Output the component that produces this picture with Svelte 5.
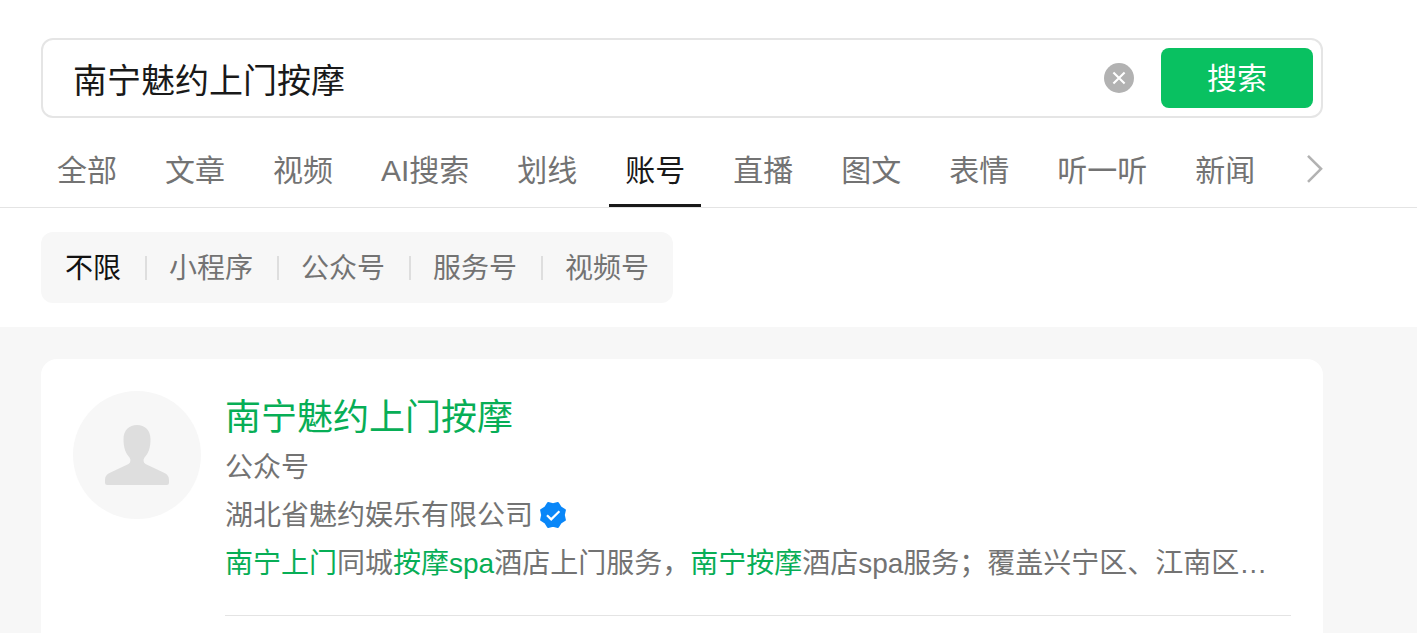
<script>
    let keyword = "南宁魅约上门按摩";
    let activeTab = "账号";
    let activeFilter = "不限";

    const tabs = ["全部", "文章", "视频", "AI搜索", "划线", "账号", "直播", "图文", "表情", "听一听", "新闻"];
    const filters = ["不限", "小程序", "公众号", "服务号", "视频号"];

    const account = {
        name: "南宁魅约上门按摩",
        type: "公众号",
        company: "湖北省魅约娱乐有限公司",
        desc: [
            {text: "南宁上门", hit: true},
            {text: "同城", hit: false},
            {text: "按摩spa", hit: true},
            {text: "酒店上门服务，", hit: false},
            {text: "南宁按摩", hit: true},
            {text: "酒店spa服务；覆盖兴宁区、江南区…", hit: false}
        ]
    };
</script>

<div class="page">
    <header class="head">
        <div class="search">
            <input class="search-input" type="text" bind:value={keyword}>
            <button class="btn-clear" aria-label="清除" on:click={() => keyword = ""}>
                <svg width="30" height="30" viewBox="0 0 30 30">
                    <circle cx="15" cy="15" r="15" fill="#b2b2b2"/>
                    <path d="M9.400 9.400l11.200 11.200M20.600 9.400L9.400 20.600" stroke="#fff" stroke-width="2.100"/>
                </svg>
            </button>
            <button class="btn-search">搜索</button>
        </div>
        <nav class="tabs">
            {#each tabs as tab}
                <button class="tab" class:active={activeTab === tab} on:click={() => activeTab = tab}>{tab}</button>
            {/each}
            <svg class="more" width="18" height="30" viewBox="0 0 18 30">
                <path d="M3 1.800l13 13-13 13" fill="none" stroke="#b2b2b2" stroke-width="2.600"/>
            </svg>
        </nav>
    </header>
    <div class="filter-area">
        <div class="filters">
            {#each filters as filter}
                <button class="filter" class:active={activeFilter === filter} on:click={() => activeFilter = filter}><span>{filter}</span></button>
            {/each}
        </div>
    </div>
    <main class="result">
        <div class="card">
            <div class="avatar">
                <svg width="64" height="60" viewBox="0 0 64 60">
                    <path d="M32 0C40 0 45.500 5.500 45.500 14C45.500 23 43.500 28 39.500 32.500C38 34.500 38.200 37.500 40.500 39L59 47.800C62.500 49.500 64 51.500 64 55V57.500Q64 60 61.500 60H2.500Q0 60 0 57.500V55C0 51.500 1.500 49.500 5 47.800L23.500 39C25.800 37.500 26 34.500 24.500 32.500C20.500 28 18.500 23 18.500 14C18.500 5.500 24 0 32 0Z" fill="#dedede"/>
                </svg>
            </div>
            <div class="info">
                <div class="name">{account.name}</div>
                <div class="line">{account.type}</div>
                <div class="line company">
                    <span>{account.company}</span>
                    <svg width="26" height="26" viewBox="0 0 26 26">
                        <path d="M13 2.200L17.900 1.100L20.600 5.400L24.900 8.100L23.800 13L24.900 17.900L20.600 20.600L17.900 24.900L13 23.800L8.100 24.900L5.400 20.600L1.100 17.900L2.200 13L1.100 8.100L5.400 5.400L8.100 1.100Z" fill="#0a87f8" stroke="#0a87f8" stroke-width="2" stroke-linejoin="round"/>
                        <path d="M7 13.200l4.200 4.200 8.200-8.200" fill="none" stroke="#fff" stroke-width="2.200"/>
                    </svg>
                </div>
                <div class="line desc">{#each account.desc as part}<span class:hit={part.hit}>{part.text}</span>{/each}</div>
            </div>
        </div>
    </main>
</div>

<style>
    :global(body){
        background: #f7f7f7;
        overflow: hidden;
    }
    .page{
        height: 633px;
        overflow: hidden;
        font-family: "Liberation Sans", "Noto Sans CJK SC", sans-serif;
        color: #737373;
    }
    button{
        margin: 0;
        padding: 0;
        border: 0;
        background: none;
        font: inherit;
        color: inherit;
        cursor: pointer;
    }
    svg{
        display: block;
        flex: none;
    }
    .head{
        box-sizing: border-box;
        height: 208px;
        padding: 38px 94px 0 41px;
        background: #fff;
        border-bottom: 1px solid #e4e4e4;
    }
    .search{
        box-sizing: border-box;
        display: flex;
        align-items: center;
        height: 80px;
        padding: 0 8px 0 30px;
        border: 2px solid #e5e5e5;
        border-radius: 12px;
    }
    .search-input{
        flex: 1;
        height: 60px;
        padding: 0;
        border: 0;
        outline: none;
        background: none;
        font-family: inherit;
        font-size: 34px;
        color: #191919;
    }
    .btn-clear{
        margin-right: 27px;
    }
    .btn-search{
        box-sizing: border-box;
        width: 152px;
        height: 60px;
        padding-bottom: 4px;
        border-radius: 8px;
        background: #09c161;
        font-size: 30px;
        color: #fff;
    }
    .tabs{
        display: flex;
        gap: 16px;
        height: 89px;
    }
    .tab{
        box-sizing: border-box;
        height: 89px;
        padding: 17px 16px 0;
        border-bottom: 3px solid transparent;
        font-size: 30px;
        line-height: 71px;
        white-space: nowrap;
    }
    .tab.active{
        border-color: #191919;
        color: #191919;
    }
    .more{
        margin: 36px 0 0 auto;
    }
    .filter-area{
        height: 119px;
        box-sizing: border-box;
        padding: 24px 41px;
        background: #fff;
    }
    .filters{
        display: inline-flex;
        align-items: center;
        height: 71px;
        padding: 0 24px;
        border-radius: 12px;
        background: #f7f7f7;
    }
    .filter{
        display: flex;
        align-items: center;
        font-size: 28px;
        line-height: 40px;
    }
    .filter span{
        padding-top: 2px;
    }
    .filter + .filter::before{
        content: "";
        width: 2px;
        height: 24px;
        margin: 0 22px 0 24px;
        background: #dedede;
    }
    .filter.active{
        color: #111;
    }
    .result{
        padding: 32px 94px 0 41px;
    }
    .card{
        display: flex;
        gap: 24px;
        height: 300px;
        padding: 32px 32px 0;
        border-radius: 16px;
        background: #fff;
    }
    .avatar{
        display: flex;
        align-items: center;
        justify-content: center;
        flex: none;
        width: 128px;
        height: 128px;
        border-radius: 50%;
        background: #f7f7f7;
    }
    .info{
        box-sizing: border-box;
        flex: 1;
        min-width: 0;
        height: 225px;
        padding-top: 1px;
        border-bottom: 1px solid #e4e4e4;
    }
    .name{
        font-size: 36px;
        line-height: 52px;
        color: #07ae56;
    }
    .line{
        height: 48px;
        font-size: 28px;
        line-height: 48px;
        white-space: nowrap;
    }
    .company{
        display: flex;
        align-items: center;
        gap: 7px;
    }
    .company svg{
        margin-bottom: 2px;
    }
    .hit{
        color: #07ae56;
    }
</style>
